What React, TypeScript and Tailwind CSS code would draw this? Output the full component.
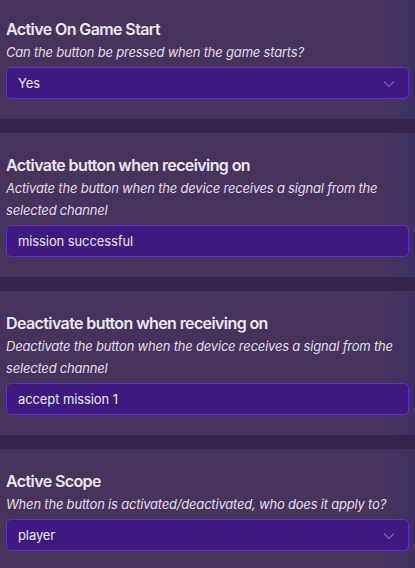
import React from "react";

function Chevron() {
  return (
    <svg width="12" height="8" viewBox="0 0 12 8" className="absolute right-[13px] top-[12px]" fill="none">
      <path d="M1 1.5 L6 6.5 L11 1.5" stroke="#7d62b5" strokeWidth="1.1" />
    </svg>
  );
}

function Section({
  title,
  desc,
  value,
  select,
  first,
}: {
  title: string;
  desc: React.ReactNode;
  value: string;
  select?: boolean;
  first?: boolean;
}) {
  return (
    <div className={`relative bg-[#46345c] px-[6px] pb-5 ${first ? "pt-[17px]" : "pt-5"}`}>
      <div className="pointer-events-none absolute inset-y-0 right-0 w-[30px] bg-gradient-to-r from-transparent to-[#3d3163]" />
      <div className="relative">
        <div className="text-[16px] leading-6 font-semibold tracking-[-0.6px] text-[#ece8f2]">{title}</div>
        <div className="text-[13px] leading-[22px] italic tracking-[-0.2px] text-[#e3dded]">{desc}</div>
        <div className="relative mt-1 h-8 rounded-[5px] border border-[#6230cc] bg-[#3e1a80] pl-[11px] text-[13px] leading-[30px] tracking-[-0.1px] text-[#ebe6f4]">
          {value}
          {select && <Chevron />}
        </div>
      </div>
    </div>
  );
}

export default function App() {
  return (
    <div className="h-[568px] w-[415px] overflow-hidden bg-[#33244b] font-['Inter',sans-serif] flex flex-col gap-[14px]">
      <Section
        first
        title="Active On Game Start"
        desc="Can the button be pressed when the game starts?"
        value="Yes"
        select
      />
      <Section
        title="Activate button when receiving on"
        desc="Activate the button when the device receives a signal from the selected channel"
        value="mission successful"
      />
      <Section
        title="Deactivate button when receiving on"
        desc="Deactivate the button when the device receives a signal from the selected channel"
        value="accept mission 1"
      />
      <Section
        title="Active Scope"
        desc="When the button is activated/deactivated, who does it apply to?"
        value="player"
        select
      />
    </div>
  );
}
